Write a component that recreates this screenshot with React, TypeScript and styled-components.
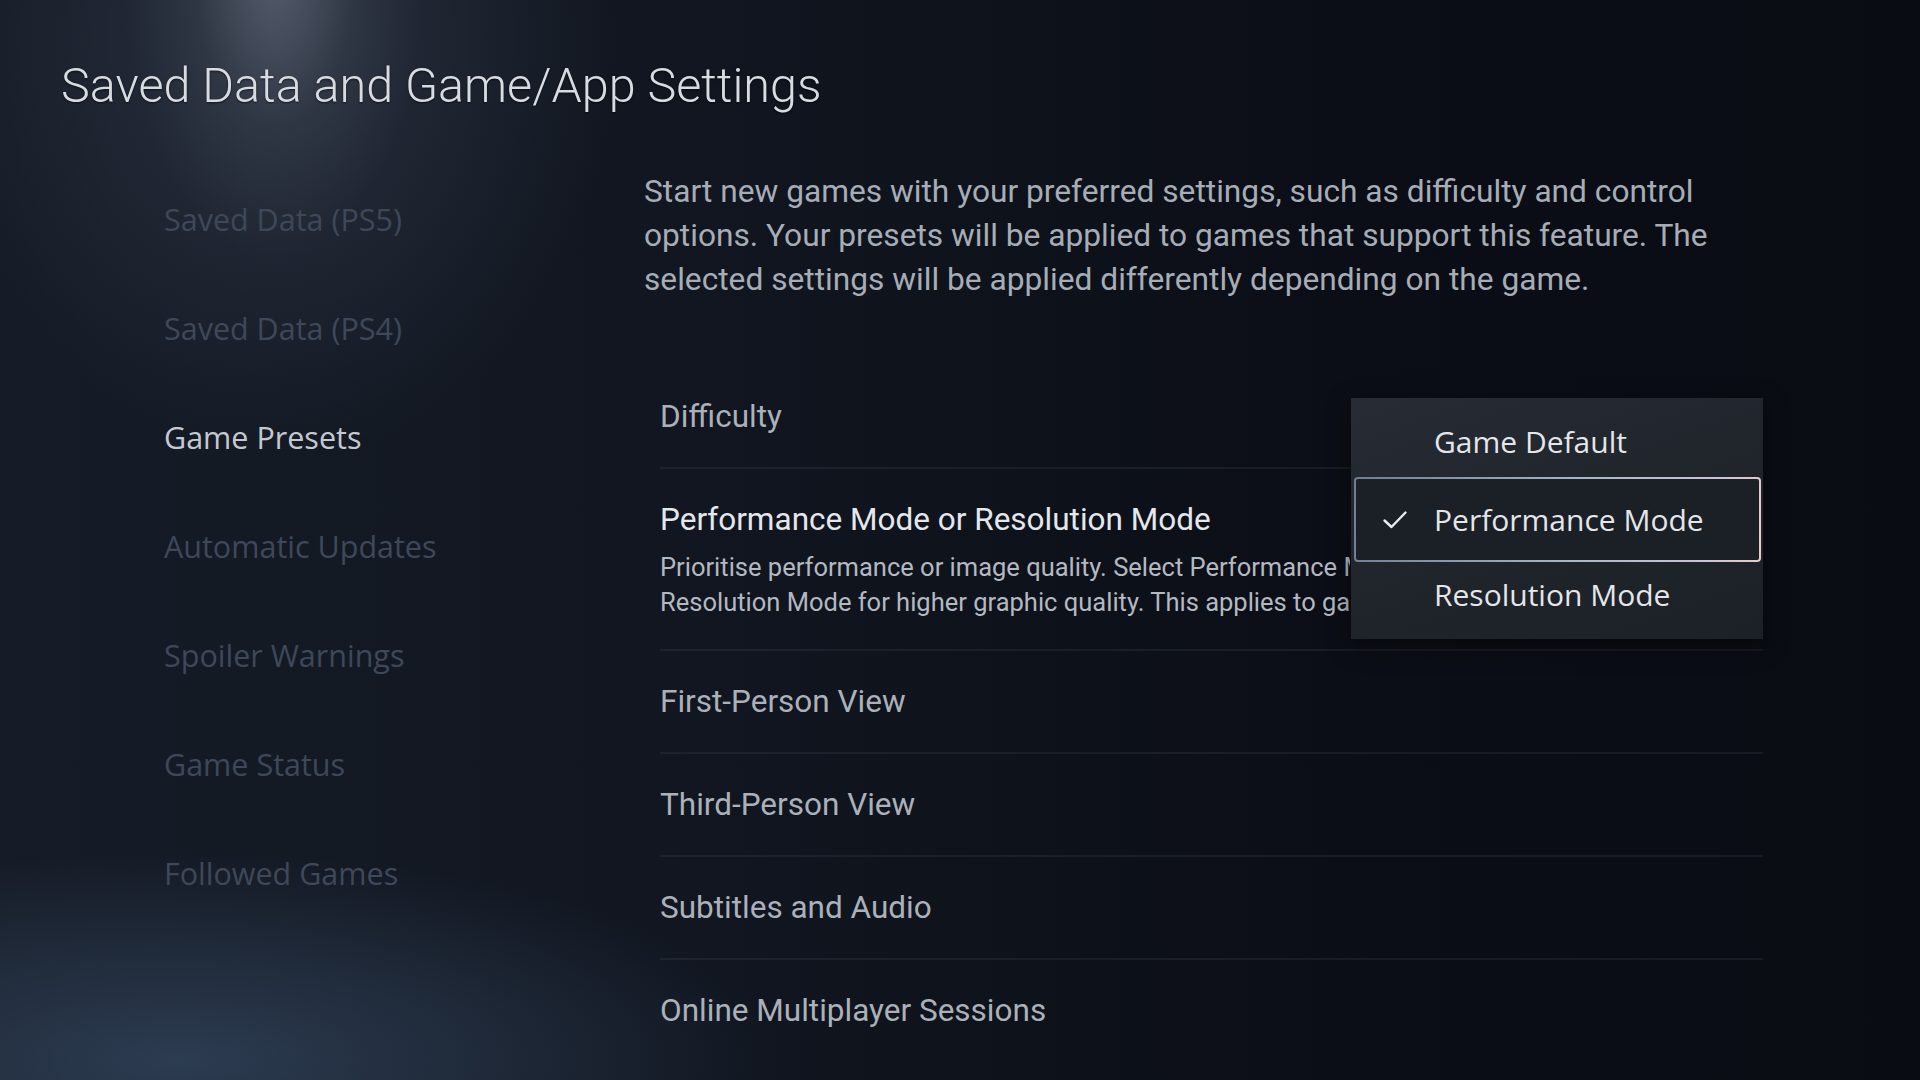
import React from "react"
import styled, { createGlobalStyle } from "styled-components"

const GlobalStyle = createGlobalStyle`
  html, body {
    margin: 0;
    padding: 0;
    background: #0a0d14;
  }
  * { box-sizing: border-box; }
`

const navItems = [
  "Saved Data (PS5)",
  "Saved Data (PS4)",
  "Game Presets",
  "Automatic Updates",
  "Spoiler Warnings",
  "Game Status",
  "Followed Games",
]

const rows = [
  "First-Person View",
  "Third-Person View",
  "Subtitles and Audio",
  "Online Multiplayer Sessions",
]

const options = ["Game Default", "Performance Mode", "Resolution Mode"]

const CheckIcon = () => (
  <svg width="26" height="22" viewBox="0 0 26 22" fill="none">
    <path d="M2.5 11.5 L9.5 18 L23.5 3.5" stroke="#e8ebef" strokeWidth="2.4" strokeLinecap="round" strokeLinejoin="round" />
  </svg>
)

const App = () => {
  return (
    <>
      <GlobalStyle />
      <StyledPage>
        <StyledTitle>Saved Data and Game/App Settings</StyledTitle>

        <StyledBody>
          <StyledNav>
            {navItems.map((item) => (
              <StyledNavItem key={item} $active={item === "Game Presets"}>
                {item}
              </StyledNavItem>
            ))}
          </StyledNav>

          <StyledContent>
            <StyledIntro>
              Start new games with your preferred settings, such as difficulty and control
              <br />
              options. Your presets will be applied to games that support this feature. The
              <br />
              selected settings will be applied differently depending on the game.
            </StyledIntro>

            <StyledList>
              <StyledRow>
                <StyledLabel>Difficulty</StyledLabel>
              </StyledRow>

              <StyledDetailRow>
                <StyledLabel $bright>Performance Mode or Resolution Mode</StyledLabel>
                {/* hint is clipped where the open menu covers it */}
                <StyledHint>
                  <span>Prioritise performance or image quality. Select Performance Mode for higher frame rates or</span>
                  <span>Resolution Mode for higher graphic quality. This applies to games that support this feature.</span>
                </StyledHint>
              </StyledDetailRow>

              {rows.map((row, i) => (
                <StyledRow key={row} $last={i === rows.length - 1}>
                  <StyledLabel>{row}</StyledLabel>
                </StyledRow>
              ))}

              <StyledMenu>
                {options.map((option, i) => (
                  <StyledOption key={option} $selected={i === 1} $index={i}>
                    <StyledCheck $visible={i === 1}>
                      <CheckIcon />
                    </StyledCheck>
                    {option}
                  </StyledOption>
                ))}
              </StyledMenu>
            </StyledList>
          </StyledContent>
        </StyledBody>
      </StyledPage>
    </>
  )
}

const StyledPage = styled.div`
  width: 1920px;
  height: 1080px;
  overflow: hidden;
  display: flex;
  flex-direction: column;
  background:
    radial-gradient(ellipse 150px 300px at 275px -40px, rgba(125, 133, 150, 0.55), rgba(90, 98, 115, 0.18) 55%, transparent 100%),
    radial-gradient(ellipse 420px 520px at 280px 40px, rgba(68, 78, 96, 0.45), transparent 80%),
    radial-gradient(ellipse 760px 260px at 180px 1060px, rgba(50, 68, 92, 0.8), transparent 80%),
    linear-gradient(90deg, #161c27 0%, #111620 35%, #0b0e16 70%, #090c13 100%);
`

const StyledTitle = styled.h1`
  margin: 0;
  padding: 55px 0 0 61px;
  font-family: Roboto, "Liberation Sans", sans-serif;
  font-weight: 300;
  font-size: 48.5px;
  line-height: 62px;
  color: #d8dce2;
  text-shadow: 0 1px 2px rgba(0, 0, 0, 0.6);
`

const StyledBody = styled.div`
  display: grid;
  grid-template-columns: 644px 1103px;
  margin-top: 47px;
`

const StyledNav = styled.nav`
  display: flex;
  flex-direction: column;
  padding-left: 164px;
`

const StyledNavItem = styled.div<{ $active?: boolean }>`
  height: 109px;
  display: flex;
  align-items: center;
  font-family: "Open Sans", "Noto Sans", sans-serif;
  font-size: 30.5px;
  color: ${({ $active }) => ($active ? "#c4c9d1" : "#3e4859")};
  white-space: nowrap;
`

const StyledContent = styled.section`
  display: flex;
  flex-direction: column;
  padding-top: 6px;
`

const StyledIntro = styled.p`
  margin: 0;
  font-family: Roboto, "Liberation Sans", sans-serif;
  font-size: 31.7px;
  line-height: 44px;
  color: #a6adb6;
  white-space: nowrap;
`

const StyledList = styled.div`
  position: relative;
  margin: 64px 0 0 16px;
  width: 1103px;
`

const StyledRow = styled.div<{ $last?: boolean }>`
  height: 103px;
  display: flex;
  align-items: center;
  border-bottom: 2px solid ${({ $last }) => ($last ? "transparent" : "rgba(120, 130, 145, 0.12)")};
`

const StyledDetailRow = styled.div`
  display: flex;
  flex-direction: column;
  padding: 33px 0 29px;
  border-bottom: 2px solid rgba(120, 130, 145, 0.12);
`

const StyledLabel = styled.div<{ $bright?: boolean }>`
  font-family: Roboto, "Liberation Sans", sans-serif;
  font-size: 31.5px;
  line-height: 36px;
  color: ${({ $bright }) => ($bright ? "#e4e7ec" : "#aab1ba")};
  white-space: nowrap;
`

const StyledHint = styled.div`
  display: flex;
  flex-direction: column;
  width: 690px;
  margin-top: 12px;
  font-family: Roboto, "Liberation Sans", sans-serif;
  font-size: 25.5px;
  line-height: 35px;
  color: #b3b9c1;
  white-space: nowrap;
  overflow: hidden;
`

const StyledMenu = styled.div`
  position: absolute;
  top: 32px;
  right: 0;
  width: 412px;
  height: 241px;
  padding: 7px 2px 0 3px;
  display: flex;
  flex-direction: column;
  background: linear-gradient(160deg, #272b33 0%, #1f232a 60%, #1c2027 100%);
  box-shadow: 0 6px 24px rgba(0, 0, 0, 0.45);
`

const StyledOption = styled.div<{ $selected?: boolean; $index: number }>`
  height: ${({ $selected, $index }) => ($selected ? 85 : $index === 0 ? 72 : 64)}px;
  display: flex;
  align-items: center;
  gap: 26px;
  padding-left: 26px;
  font-family: "Open Sans", "Noto Sans", sans-serif;
  font-size: 30px;
  color: #e3e6ea;
  border: 2px solid transparent;
  border-radius: 4px;
  background: ${({ $selected }) =>
    $selected
      ? "linear-gradient(#1b1f26, #1b1f26) padding-box, linear-gradient(100deg, #6f7d90 0%, #a9b6c6 55%, #c9c2d8 85%, #e8cbc8 100%) border-box"
      : "none"};
`

const StyledCheck = styled.span<{ $visible?: boolean }>`
  display: flex;
  width: 26px;
  visibility: ${({ $visible }) => ($visible ? "visible" : "hidden")};
`

export default App
